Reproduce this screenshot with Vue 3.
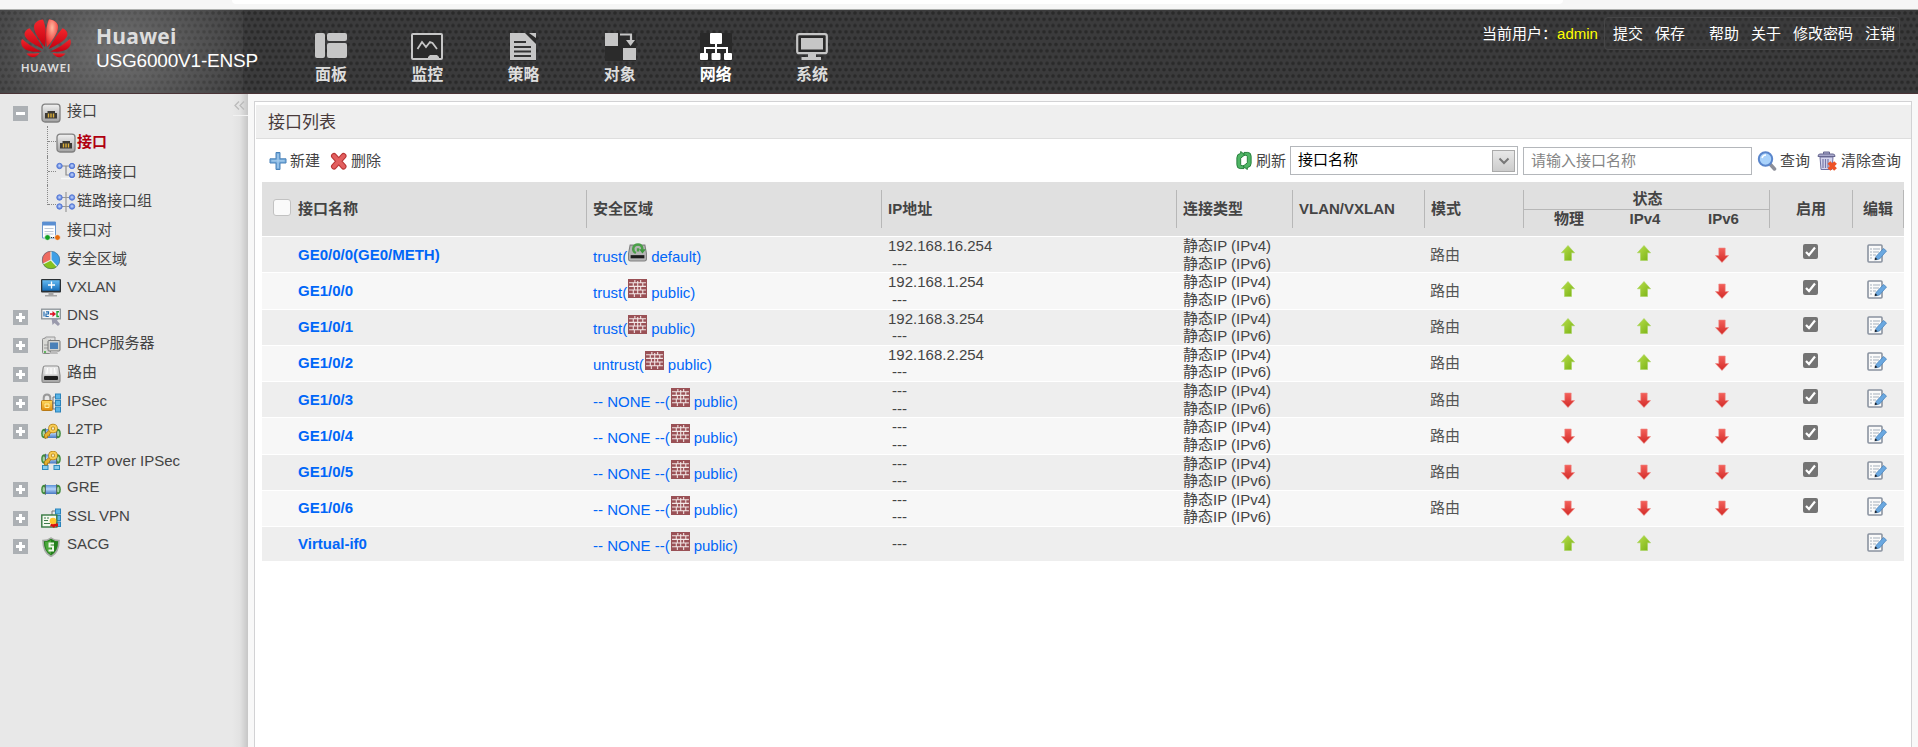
<script setup>
const nav = [
  { icon: 'dash', label: '面板' },
  { icon: 'monitor', label: '监控' },
  { icon: 'policy', label: '策略' },
  { icon: 'object', label: '对象' },
  { icon: 'network', label: '网络', active: true },
  { icon: 'system', label: '系统' },
]

const tree = [
  { icon: 'port', label: '接口', toggle: '-', cls: 'root' },
  { icon: 'port', label: '接口', cls: 'child current' },
  { icon: 'link', label: '链路接口', cls: 'child' },
  { icon: 'linkgroup', label: '链路接口组', cls: 'child last' },
  { icon: 'pair', label: '接口对' },
  { icon: 'zone', label: '安全区域' },
  { icon: 'vxlan', label: 'VXLAN' },
  { icon: 'dns', label: 'DNS', toggle: '+' },
  { icon: 'dhcp', label: 'DHCP服务器', toggle: '+' },
  { icon: 'route', label: '路由', toggle: '+' },
  { icon: 'ipsec', label: 'IPSec', toggle: '+' },
  { icon: 'l2tp', label: 'L2TP', toggle: '+' },
  { icon: 'l2tpip', label: 'L2TP over IPSec', cls: 'low' },
  { icon: 'gre', label: 'GRE', toggle: '+' },
  { icon: 'ssl', label: 'SSL VPN', toggle: '+' },
  { icon: 'sacg', label: 'SACG', toggle: '+' },
]

const row = (name, zone, vsys, ip, phy, v4) => ({
  name, zone, vsys, ips: [ip, '---'], types: ['静态IP (IPv4)', '静态IP (IPv6)'],
  mode: '路由', status: [phy, v4, 'down'], enable: true,
})
const rows = [
  row('GE0/0/0(GE0/METH)', 'trust(', 'default', '192.168.16.254', 'up', 'up'),
  row('GE1/0/0', 'trust(', 'public', '192.168.1.254', 'up', 'up'),
  row('GE1/0/1', 'trust(', 'public', '192.168.3.254', 'up', 'up'),
  row('GE1/0/2', 'untrust(', 'public', '192.168.2.254', 'up', 'up'),
  row('GE1/0/3', '-- NONE --(', 'public', '---', 'down', 'down'),
  row('GE1/0/4', '-- NONE --(', 'public', '---', 'down', 'down'),
  row('GE1/0/5', '-- NONE --(', 'public', '---', 'down', 'down'),
  row('GE1/0/6', '-- NONE --(', 'public', '---', 'down', 'down'),
  { name: 'Virtual-if0', zone: '-- NONE --(', vsys: 'public', ips: ['---'], types: [], mode: '', status: ['up', 'up', ''], enable: false },
]
</script>

<template>
  <div class="page">
    <svg class="defs" width="0" height="0" aria-hidden="true">
      <defs>
        <linearGradient id="gRed" x1="0" y1="0" x2="0" y2="1"><stop offset="0" stop-color="#f4262c" /><stop offset="1" stop-color="#c40010" /></linearGradient>
        <radialGradient id="gShine" cx=".5" cy=".3" r=".65"><stop offset="0" stop-color="#ffb9a0" /><stop offset="1" stop-color="#ec2a2c" /></radialGradient>
        <linearGradient id="gUp" x1="0" y1="0" x2="1" y2="1"><stop offset="0" stop-color="#b9e04c" /><stop offset="1" stop-color="#78b014" /></linearGradient>
        <linearGradient id="gDown" x1="0" y1="0" x2="0" y2="1"><stop offset="0" stop-color="#f4605a" /><stop offset="1" stop-color="#d22b28" /></linearGradient>
        <linearGradient id="gMetal" x1="0" y1="0" x2="0" y2="1"><stop offset="0" stop-color="#f2f2f2" /><stop offset="1" stop-color="#a2a2a2" /></linearGradient>
        <linearGradient id="gBlue" x1="0" y1="0" x2="0" y2="1"><stop offset="0" stop-color="#65baf2" /><stop offset="1" stop-color="#166fbb" /></linearGradient>
        <linearGradient id="gPipe" x1="0" y1="0" x2="0" y2="1"><stop offset="0" stop-color="#5b93d8" /><stop offset=".45" stop-color="#b4d3fa" /><stop offset="1" stop-color="#4477c2" /></linearGradient>
        <linearGradient id="gGold" x1="0" y1="0" x2="0" y2="1"><stop offset="0" stop-color="#ffd95c" /><stop offset="1" stop-color="#e08a0c" /></linearGradient>
        <radialGradient id="gNode" cx=".5" cy=".45" r=".55"><stop offset="0" stop-color="#c6d9ff" /><stop offset="1" stop-color="#4a6fd2" /></radialGradient>
      </defs>

      <symbol id="dash" viewBox="0 0 32 28"><rect x="0" y="0" width="10" height="25" rx="2" /><rect x="12" y="0" width="20" height="8" rx="2" /><rect x="12" y="10" width="20" height="15" rx="2" /></symbol>
      <symbol id="monitor" viewBox="0 0 32 28"><rect x="1" y="1" width="30" height="25" rx="1" fill="#2a2a2a" stroke="currentColor" stroke-width="2" /><path d="M6.500 16L11 9l4 5 4-5 2.500 1 4.500 6" fill="none" stroke="currentColor" stroke-width="1.800" /><path d="M17 26v-2l2-2h7l2 2v2z" /></symbol>
      <symbol id="policy" viewBox="0 0 32 28"><rect x="3" width="26" height="28" fill="#2c2c2c" /><path d="M3 0h15l11 11v16H3z" /><path d="M22 0h7v5z" /><path d="M7 9h12M7 14h17M7 18.500h17M7 23h17" stroke="#333" stroke-width="2" /></symbol>
      <symbol id="object" viewBox="0 0 32 28"><rect x="1" width="31" height="28" fill="#2b2b2b" /><rect x="1" y="0" width="13" height="13" /><rect x="19" y="15" width="13" height="12" /><path d="M16 1.500h11V8" fill="none" stroke="currentColor" stroke-width="2.200" /><path d="M22 7h9l-4.500 6z" /></symbol>
      <symbol id="network" viewBox="0 0 32 28"><rect width="32" height="28" fill="#292929" /><rect x="10" y="0" width="12" height="11" rx="1" /><path d="M16 10v12M5 21v-6h22v6" fill="none" stroke="currentColor" stroke-width="2" /><rect x="0" y="20" width="8" height="7" rx="1" /><rect x="11.500" y="20" width="9" height="7" rx="1" /><rect x="24" y="20" width="8" height="7" rx="1" /></symbol>
      <symbol id="system" viewBox="0 0 32 28"><rect x="1.200" y="1.200" width="29.600" height="19" rx="2" fill="#2a2a2a" stroke="currentColor" stroke-width="2.200" /><rect x="5" y="5" width="22" height="11.500" /><path d="M12 20h8v4h5v3H5.500v-3H12z" /></symbol>

      <symbol id="port" viewBox="0 0 20 20"><rect x="1" y="1.200" width="18" height="17.800" rx="3" fill="url(#gMetal)" stroke="#808080" stroke-width="1.300" /><path d="M4 15.500V10h2.500V8h7.500v2H16v5.500z" fill="#3c3a36" /><path d="M7.500 10.500v4M10 10.500v4M12.500 10.500v4" stroke="#dcae38" stroke-width="1.400" /></symbol>
      <symbol id="link" viewBox="0 0 20 20"><path d="M4 4h11M10 4v9h5" fill="none" stroke="#8b8b8b" stroke-width="1.200" /><path d="M5 16.500h13" stroke="#f7f7f7" stroke-width="1.500" /><g fill="url(#gNode)" stroke="#587bd7"><circle cx="3.500" cy="4" r="2.700" /><circle cx="16" cy="4" r="2.700" /><circle cx="16" cy="13" r="2.700" /></g></symbol>
      <symbol id="linkgroup" viewBox="0 0 20 20"><path d="M4 5.500h11M4 14.500h11M10 0v20" fill="none" stroke="#999" stroke-width="1.200" /><g fill="url(#gNode)" stroke="#587bd7"><circle cx="3.500" cy="5.500" r="2.700" /><circle cx="16" cy="5.500" r="2.700" /><circle cx="3.500" cy="14.500" r="2.700" /><circle cx="16" cy="14.500" r="2.700" /></g></symbol>
      <symbol id="pair" viewBox="0 0 20 20"><path d="M1.500 1h13v16h-13z" fill="#fff" stroke="#6d97cc" /><path d="M1.500 1h13v3.500h-13z" fill="#5a8fd2" /><path d="M3.500 7.500h9M3.500 10.500h9M3.500 13h9" stroke="#c1cad5" /><path d="M8 16.500h7" stroke="#333" stroke-dasharray="1 1" /><circle cx="6.500" cy="16.500" r="2.800" fill="#12a021" stroke="#f2f2f2" stroke-width=".6" /><circle cx="16.500" cy="16.500" r="2.800" fill="#e86c0a" stroke="#f2f2f2" stroke-width=".6" /></symbol>
      <symbol id="zone" viewBox="0 0 20 20"><circle cx="10" cy="10" r="9" fill="#3f9fe6" /><path d="M10 10V1a9 9 0 0 0-8 13z" fill="#ee6a60" /><path d="M10 10L2 14a9 9 0 0 0 14 2.700z" fill="#85c21f" /><path d="M10 1v9l-8 4M10 10l6 6.700" fill="none" stroke="#e9f2e5" stroke-width="1.200" /><circle cx="10" cy="10" r="8.700" fill="none" stroke="#47606b" stroke-opacity=".5" /></symbol>
      <symbol id="vxlan" viewBox="0 0 20 20"><rect x="0" y="1" width="20" height="13.500" rx="1" fill="#2a3034" /><rect x="1.300" y="2.200" width="17.400" height="10.500" fill="url(#gBlue)" /><path d="M10.500 3.500v7M7 7h7" stroke="#fff" stroke-width="1.300" /><path d="M7.500 14.500h5V17H16v1.500H4V17h3.500z" fill="#a5a5a5" /></symbol>
      <symbol id="dns" viewBox="0 0 20 20"><rect x=".7" y="2.200" width="18.600" height="9.600" fill="#f3f5f7" stroke="#8b9297" stroke-width="1.300" /><path d="M3 4.500v5M5 4.800h2.500v2.200H5v2.500h2.800" stroke="#236caf" stroke-width="1.200" fill="none" /><path d="M9 7h4" stroke="#d12" stroke-width="1.600" /><path d="M11.500 4l3.500 3-3.500 3z" fill="#d12" /><path d="M18 4.800h-2v4.700h2" stroke="#22a035" stroke-width="1.400" fill="none" /><path d="M10.500 11l7 1-1.500 1.500L19 17l-2 2-3.500-3-2 2z" fill="#9a9aac" /></symbol>
      <symbol id="dhcp" viewBox="0 0 20 20"><rect x="1.500" y="2.500" width="8" height="15" rx="1" fill="#d9d9d5" stroke="#888" /><path d="M3 2.500l2-1.500h9v3" fill="#ddd" stroke="#999" /><path d="M3 9h4M3 12h4" stroke="#999" /><rect x="7" y="4.500" width="12" height="10.500" rx="1" fill="#d2d3d0" stroke="#777" /><rect x="9" y="6.500" width="8" height="6.500" fill="#4a80b8" /><path d="M10 15h6l1 3H9z" fill="#bbb" /><circle cx="4" cy="16" r="1" fill="#38a838" /></symbol>
      <symbol id="route" viewBox="0 0 20 20"><path d="M4 2h12q1.500 0 1.800 1.500L19 11.500v5.500q0 1.500-1.500 1.500h-15Q1 18.500 1 17v-5.500l1.200-8Q2.500 2 4 2z" fill="url(#gMetal)" stroke="#8a8a8a" stroke-width="1.200" /><path d="M4.500 3.500h11l1 7h-13z" fill="#e9e9e9" /><rect x="3" y="12" width="14" height="4" rx="1" fill="#1c1c1c" /><path d="M6.500 4l-.7 6M10 4v6M13.500 4l.7 6" stroke="#fff" /></symbol>
      <symbol id="ipsec" viewBox="0 0 20 20"><path d="M2.700 9V5q0-3.500 3.300-3.500T9.300 5v4" fill="none" stroke="#999" stroke-width="2" /><rect x=".5" y="7.500" width="11" height="10" rx="1" fill="url(#gGold)" stroke="#b87a16" /><path d="M4 11h4v3.500H4z" fill="none" stroke="#fff0a0" /><path d="M14 4h-2v12h2M11 10h3" stroke="#777" fill="none" /><g fill="#5ab4e6" stroke="#2b83bb"><rect x="14.500" y="1" width="5" height="5" /><rect x="14.500" y="7.500" width="5" height="5" /><rect x="14.500" y="14" width="5" height="5" /></g></symbol>
      <symbol id="pipe" viewBox="0 0 20 20"><ellipse cx="3.500" cy="10.500" rx="3.300" ry="4.800" fill="#3f8a3c" /><ellipse cx="16.500" cy="10.500" rx="3.300" ry="4.800" fill="#3f8a3c" /><ellipse cx="2.800" cy="10.500" rx="1.200" ry="2.800" fill="#a9d2a2" /><ellipse cx="17.200" cy="10.500" rx="1.200" ry="2.800" fill="#a9d2a2" /><path d="M4.500 6h11v9h-11z" fill="url(#gPipe)" /><path d="M4.500 5.300v10.400M15.500 5.300v10.400" stroke="#566673" /></symbol>
      <symbol id="key" viewBox="0 0 20 20"><path d="M9 7.500l-5.500 5V16h3v-2h2v-2l3.500-2.500z" fill="#e5b030" stroke="#a97611" stroke-width=".8" /><circle cx="12" cy="6.500" r="3" fill="#f6edc8" stroke="#b07d12" stroke-width="3.600" /><circle cx="12" cy="6.500" r="3" fill="none" stroke="#f8cd55" stroke-width="2.200" /></symbol>
      <symbol id="l2tp" viewBox="0 0 20 20"><use href="#pipe" y="1" width="20" height="20" /><use href="#key" width="20" height="20" /></symbol>
      <symbol id="l2tpip" viewBox="0 0 20 20"><use href="#pipe" y="-2.500" width="20" height="20" /><g fill="#87ccef" stroke="#2b89bd"><rect x="1.500" y="14.500" width="5.500" height="4" /><rect x="13" y="14.500" width="5.500" height="4" /></g><use href="#key" y="-2" width="20" height="20" /></symbol>
      <symbol id="gre" viewBox="0 0 20 20"><use href="#pipe" width="20" height="20" /></symbol>
      <symbol id="ssl" viewBox="0 0 20 20"><g fill="#5ab4e6" stroke="#2b83bb"><rect x="14.500" y="1" width="5" height="5" /><rect x="14.500" y="7.500" width="5" height="5" /><rect x="14.500" y="14" width="5" height="4.500" /></g><path d="M14 3h-3v4" stroke="#777" fill="none" /><rect x=".8" y="7" width="15" height="12" fill="#f4f9f0" stroke="#367941" stroke-width="1.400" /><path d="M3 10h2M6 10h2M3 12.500h4M3 15.500h6" stroke="#3f7d4c" /><path d="M10 15.500h7v3h-3l-1 1.500-2-1.500H9z" fill="#d51313" /><circle cx="12" cy="13" r="3.300" fill="#ffc629" /></symbol>
      <symbol id="sacg" viewBox="0 0 20 20"><path d="M2 3.500q5 0 8-2.500 3 2.500 8 2.500 0 12-8 16-8-4-8-16z" fill="#24811c" stroke="#a6aaa6" stroke-width="1.600" /><path d="M4 5q4 0 6-2v14.500Q4 14 4 5z" fill="#4ca93b" /><path d="M13 6.500H8.500v3H12v4H7.500" fill="none" stroke="#eef8e8" stroke-width="2" /></symbol>

      <symbol id="add" viewBox="0 0 20 20"><path d="M8 1.500h4v6.300h6V12h-6v6.500H8V12H2V7.800h6z" fill="#75abdb" stroke="#4a82ba" stroke-linejoin="round" /><path d="M10 3v14M3.500 9.800h13" stroke="#a8ceee" stroke-width="1.200" /></symbol>
      <symbol id="del" viewBox="0 0 18 20"><path d="M4 5l9.500 10.500M13.500 5L4 15.500" stroke="#b93535" stroke-width="6" stroke-linecap="round" /><path d="M4 5l9.500 10.500M13.500 5L4 15.500" stroke="#e25f5f" stroke-width="4" stroke-linecap="round" /></symbol>
      <symbol id="refresh" viewBox="0 0 18 20"><g fill="#4fb565" stroke="#237c38" stroke-width="1"><path d="M9 18.500H5q-3.500 0-3.500-4V7q0-4 4-4.500V.5L10 4 5.500 7.500V14q0 1.500 1.500 1.500h2z" /><path d="M9 1.500h4q3.500 0 3.500 4V13q0 4-4 4.500v2L8 16l4.500-3.500V6q0-1.500-1.500-1.500H9z" /></g></symbol>
      <symbol id="search" viewBox="0 0 20 20"><path d="M13 13l4.500 5" stroke="#8d8f99" stroke-width="3.500" stroke-linecap="round" /><circle cx="8.500" cy="8" r="6.700" fill="#a9d2fb" stroke="#5a86cc" stroke-width="2" /><path d="M5 7q1-3 4-3" fill="none" stroke="#fff" stroke-width="1.500" /></symbol>
      <symbol id="trash" viewBox="0 0 20 20"><path d="M3 6h13l-1 12.500H4z" fill="#d6d6ee" stroke="#7070a0" /><path d="M6 8v9M8.500 8v9M11 8v9" stroke="#7676a8" stroke-width="1.200" /><path d="M1 5.500q0-2.500 2-2.500h13q2 0 2 2.500zM6.500 3V1h6v2" fill="#a9a9cc" stroke="#66668f" /><path d="M12 11.500l6.500 7M18.500 11.500l-6.500 7" stroke="#ee5226" stroke-width="3.800" /></symbol>
      <symbol id="up" viewBox="0 0 14 16"><path d="M7 .5l6.600 7.300h-3.100v7.700h-7V7.800H.4z" fill="url(#gUp)" stroke="#a8d35e" stroke-width=".6" /></symbol>
      <symbol id="down" viewBox="0 0 14 16"><path d="M7 15.500L.4 8.500h3.400V1h6.400v7.500h3.400z" fill="url(#gDown)" stroke="#ef8b86" stroke-width=".6" /></symbol>
      <symbol id="edit" viewBox="0 0 20 19"><rect x="1" y="1" width="14" height="17" rx="1" fill="#fafafa" stroke="#8a93a0" stroke-width="1.600" /><path d="M3 5h2M6 5h7M3 8h2M6 8h6M3 11h2M6 11h3M3 14h2" stroke="#a5b0bc" /><path d="M16.500 4.500l3 2.500-7 8-4 .8.800-3.600z" fill="#6aa8e0" stroke="#4a84bc" stroke-width=".8" /><path d="M8 13.200l-.4 3 3-.9z" fill="#1b2530" /></symbol>
      <symbol id="brick" viewBox="0 0 18 18"><rect width="18" height="18" fill="#9a5156" /><path d="M1 3.500h16M1 7h16M1 10.500h16M1 14h16M6.500 1v2.500M12 1v2.500M5 3.500V7M14 3.500V7M6 7v3.500M12 7v3.500M5 10.500V14M14 10.500V14M6 14v3M12 14v3M9.200 2v12" stroke="#f3e8e7" stroke-width="1" /></symbol>
      <symbol id="vsys" viewBox="0 0 18 18"><path d="M2 2h14l1.500 8v5q0 2-2 2h-13q-2 0-2-2v-5z" fill="#b5b5b5" stroke="#828282" /><rect x="2.500" y="11.500" width="13" height="3" fill="#1d1d1d" /><path d="M7.500 9.500Q4.500 8 5 5q.8-3.500 4.500-3.500Q13 1.500 13.500 5v1.500M9.500 5v3" fill="none" stroke="#4aa048" stroke-width="2.300" /><path d="M10.500 6h6.500l-3.300 4z" fill="#3d983c" /></symbol>
    </svg>

    <div class="browser-edge"><div class="tab-edge"></div></div>

    <header class="header">
      <div class="brand">
        <div class="logo">
          <svg width="50" height="40" viewBox="0 0 50 40">
            <g id="petals" fill="url(#gRed)">
              <path d="M24 28C19.500 22.500 13 14 13 8c0-4 3.500-7 9-7.500C25.500 8 25.200 19 24 28z" />
              <path d="M22.300 30C14 26 3.500 21 3.500 15c0-2.500 2-4.500 5-5.800C12 13 18.500 22 22.300 30z" />
              <path d="M20.500 32.500C12 33.500 3 32 .8 26.500 0 24 0 22 1 20c5 4.500 12 9 19.500 12.500z" />
              <path d="M18.500 34c-3 5-9 6-13 .5 4 .3 9 0 13-.5z" />
            </g>
            <use href="#petals" transform="matrix(-1 0 0 1 50 0)" />
            <path d="M26 28C30.500 22.500 37 14 37 8c0-4-3.500-7-9-7.500C24.500 8 24.800 19 26 28z" fill="url(#gShine)" />
          </svg>
          <span class="logo-text">HUAWEI</span>
        </div>
        <div class="product"><b>Huawei</b><span>USG6000V1-ENSP</span></div>
      </div>
      <nav class="nav">
        <a v-for="n in nav" :key="n.icon" :class="{ active: n.active }">
          <svg width="32" height="28"><use :href="'#' + n.icon" /></svg>
          <span>{{ n.label }}</span>
        </a>
      </nav>
      <div class="user">
        <span class="who">当前用户：<em>admin</em></span>
        <div class="links">
          <a>提交</a><a>保存</a><a class="gap">帮助</a><a>关于</a><a>修改密码</a><a>注销</a>
        </div>
      </div>
    </header>

    <div class="body">
      <aside class="side">
        <div v-for="(t, i) in tree" :key="i" class="item" :class="[t.cls, { toggled: t.toggle }]">
          <span class="slot"><i v-if="t.toggle" class="toggle" :class="{ plus: t.toggle === '+' }"></i></span>
          <svg width="20" height="20"><use :href="'#' + t.icon" /></svg>
          <span class="label">{{ t.label }}</span>
        </div>
        <div class="collapse"><svg width="11" height="9" viewBox="0 0 11 9"><path d="M5 .5L1 4.500l4 4M10 .5L6 4.500l4 4" fill="none" stroke="#bbb" stroke-width="1.300" /></svg></div>
      </aside>

      <main class="panel">
        <h1>接口列表</h1>
        <div class="tools">
          <svg width="20" height="20"><use href="#add" /></svg><span class="t-add">新建</span>
          <svg width="18" height="20"><use href="#del" /></svg><span class="t-del">删除</span>
          <svg class="i-refresh" width="18" height="19"><use href="#refresh" /></svg><span class="t-refresh">刷新</span>
          <div class="select"><span>接口名称</span><i><svg width="12" height="8" viewBox="0 0 12 8"><path d="M1.500 1.500L6 6l4.500-4.500" fill="none" stroke="#777" stroke-width="2" /></svg></i></div>
          <input class="query" placeholder="请输入接口名称" />
          <svg class="i-search" width="20" height="20"><use href="#search" /></svg><span class="t-search">查询</span>
          <svg class="i-trash" width="20" height="20"><use href="#trash" /></svg><span class="t-trash">清除查询</span>
        </div>

        <div class="grid">
          <div class="row head">
            <div class="cell first"><i class="box"></i>接口名称</div>
            <div class="cell">安全区域</div>
            <div class="cell">IP地址</div>
            <div class="cell">连接类型</div>
            <div class="cell">VLAN/VXLAN</div>
            <div class="cell">模式</div>
            <div class="cell status">
              <div class="top">状态</div>
              <div class="subs"><span>物理</span><span>IPv4</span><span>IPv6</span></div>
            </div>
            <div class="cell mid">启用</div>
            <div class="cell mid">编辑</div>
          </div>
          <div v-for="r in rows" :key="r.name" class="row data">
            <div class="cell name">{{ r.name }}</div>
            <div class="cell zone">{{ r.zone }}<svg width="19" height="19"><use :href="r.vsys === 'default' ? '#vsys' : '#brick'" /></svg><span>{{ r.vsys }})</span></div>
            <div class="cell lines ip"><span v-for="(x, i) in r.ips" :key="i" :class="{ none: x === '---' }">{{ x }}</span></div>
            <div class="cell lines"><span v-for="x in r.types" :key="x">{{ x }}</span></div>
            <div class="cell"></div>
            <div class="cell mode">{{ r.mode }}</div>
            <div class="cell subs">
              <span v-for="(s, i) in r.status" :key="i"><svg v-if="s" :class="s" width="14" height="16"><use :href="'#' + s" /></svg></span>
            </div>
            <div class="cell mid">
              <svg v-if="r.enable" class="check" width="15" height="15" viewBox="0 0 15 15"><rect width="15" height="15" rx="2" fill="#747474" /><path d="M3 8l3 3 6-7.500" fill="none" stroke="#fff" stroke-width="2.200" /></svg>
            </div>
            <div class="cell mid"><svg class="edit" width="20" height="19"><use href="#edit" /></svg></div>
          </div>
        </div>
      </main>
    </div>
  </div>
</template>

<style>
body { margin: 0; overflow: hidden; }
</style>

<style scoped>
.page { height: 747px; display: flex; flex-direction: column; overflow: hidden; background: #f8f8f8; color: #444; font: 15px/18px "Liberation Sans", "Noto Sans CJK SC", sans-serif; }
.page * { box-sizing: border-box; }
svg { display: block; flex: none; }
.defs { position: absolute; }
.browser-edge { height: 10px; flex: none; background: #f6f6f6; border-bottom: 1px solid #aeb0ae; }
.tab-edge { height: 4px; margin: 0 355px 0 232px; background: #fff; border-radius: 0 0 5px 5px; }

.header { position: relative; height: 84px; flex: none; display: flex; border-bottom: 1px solid #4a3437;
  background: radial-gradient(circle at 3px 3px, #2a2a2a 1.300px, transparent 2.200px) 0 0 / 6px 12.600px, radial-gradient(circle at 0 9.300px, #2a2a2a 1.300px, transparent 2.200px) 0 0 / 6px 12.600px, radial-gradient(circle at 6px 9.300px, #2a2a2a 1.300px, transparent 2.200px) 0 0 / 6px 12.600px, #3b3b3c; }
.brand { width: 243px; display: flex; background: radial-gradient(ellipse 150px 110px at 112px 40px, rgba(160, 160, 160, .52), rgba(150, 150, 150, .32) 50%, rgba(150, 150, 150, .04)); }
.logo { width: 50px; margin: 9px 0 0 21px; display: flex; flex-direction: column; align-items: center; }
.logo-text { margin-top: 2px; font: 700 11px/14px Lato, sans-serif; letter-spacing: .9px; color: #ddd; }
.product { margin: 12px 0 0 25px; display: flex; flex-direction: column; white-space: nowrap; }
.product b { font: 700 21px/28px "Open Sans", sans-serif; color: #ddd; letter-spacing: .2px; }
.product span { font-size: 19px; line-height: 22px; color: #fff; letter-spacing: -.2px; }
.nav { display: flex; margin-left: 40px; }
.nav a { width: 96.200px; padding-top: 23px; display: flex; flex-direction: column; align-items: center; color: #c6c6c6; fill: currentColor; }
.nav span { margin-top: 3px; font-size: 16px; line-height: 22px; font-weight: 700; color: #ddd; }
.nav .active, .nav .active span { color: #fff; }
.user { display: flex; margin: 7px 18px 0 auto; color: #fff; }
.who { line-height: 33px; margin-right: 6px; }
.who em { font-style: normal; color: #ff0; }
.links { height: 33px; display: flex; align-items: center; gap: 12px; padding: 0 4px 0 8px; border: 1px solid #464647; border-radius: 4px; background: rgba(60, 60, 60, .25); }
.links .gap { margin-left: 12px; }

.body { flex: 1; display: flex; min-height: 0; }
.side { position: relative; width: 248px; flex: none; padding-top: 4px; background: linear-gradient(90deg, #e8e8e8 232px, #e2e2e2 240px, #c6c6c6 248px); }
.item { position: relative; height: 28.730px; display: flex; align-items: center; }
.item.root { height: 30px; }
.item.child { height: 29.500px; }
.slot { width: 41px; padding-left: 13px; flex: none; }
.child .slot { width: 56px; }
.label { margin: 0 0 2px 6px; white-space: nowrap; }
.child .label { margin: 0 0 1px 1px; }
.toggled .label { margin-bottom: 5px; }
.low .label { margin-bottom: 0; }
.current .label { color: #b00010; font-weight: 700; }
.toggle { display: block; width: 15px; height: 15px; background: linear-gradient(#fff, #fff) center / 9px 3px no-repeat, #acb0b4; }
.toggle.plus { background: linear-gradient(#fff, #fff) center / 9px 3px no-repeat, linear-gradient(#fff, #fff) center / 3px 9px no-repeat, #acb0b4; }
.child::before { content: ""; position: absolute; left: 47px; top: -2px; bottom: 0; border-left: 1px dotted #888; }
.child::after { content: ""; position: absolute; left: 48px; top: 13px; width: 8px; border-top: 1px dotted #888; }
.child.last::before { bottom: 12px; }
.child.last::after { top: 17px; }
.collapse { position: absolute; right: 0; top: 0; width: 15px; height: 22px; padding: 7px 0 0 1px; border-bottom: 1px solid #f2f2f2; }

.panel { width: 1658px; margin: 7px 0 0 6px; border: 1px solid #d2d2d4; border-bottom: 0; background: #fff; }
h1 { margin: 3px 0 0 1px; height: 34px; padding-left: 12px; background: #efefef; border-bottom: 1px solid #dedede; font-size: 17px; line-height: 35px; font-weight: 400; color: #493b3b; }
.tools { height: 43px; padding: 0 0 0 13px; display: flex; align-items: center; white-space: nowrap; }
.t-add { margin: 0 10px 0 2px; }
.t-del { margin-left: 3px; }
.i-refresh { margin-left: 854px; }
.t-refresh { margin: 0 4px 0 3px; }
.select { width: 228px; height: 29px; display: flex; align-items: center; border: 1px solid #b4b7bb; padding: 0 2px 0 7px; color: #000; }
.select span { margin-bottom: 2px; }
.select i { width: 23px; height: 22px; margin-left: auto; display: flex; align-items: center; justify-content: center; border: 1px solid #aaa; background: linear-gradient(#e8e8e8, #ccc); }
.query { width: 229px; height: 28px; margin: 0 5px; padding: 0 7px; border: 1px solid #b4b7bb; font: inherit; }
.query::placeholder { color: #858585; }
.t-search { margin: 0 7px 0 3px; }
.t-trash { margin-left: 4px; }

.grid { margin-left: 7px; width: 1642px; }
.row { display: grid; grid-template-columns: 325px 295px 295px 116px 132px 99px 246px 83px 51px; height: 36.250px; border-bottom: 1px solid #fff; background: #f7f7f7; }
.data:nth-child(even) { background: #eee; }
.data:last-child { height: 35px; }
.cell { display: flex; align-items: center; padding-left: 6px; white-space: nowrap; min-width: 0; }
.head { height: 55px; padding: 8px 0; background: #e0e0e0; font-weight: 700; }
.head .cell { border-right: 1px solid #b7b7b7; }
.head .first { padding-left: 11px; }
.box { width: 18px; height: 17px; margin: -3px 7px 0 0; border: 1px solid #c2c2c2; border-radius: 3px; background: #fafafa; }
.head .status { flex-direction: column; align-items: stretch; padding: 0; }
.top { height: 20px; line-height: 18px; padding-left: 2px; text-align: center; border-bottom: 1px solid #b7b7b7; }
.subs { display: grid; grid-template-columns: 89px 63px 94px; padding: 0; }
.subs span { display: flex; justify-content: center; }
.head .subs span { padding-left: 1px; line-height: 18px; }
.data .subs span { padding-right: 2px; }
.mid { justify-content: center; padding: 0; }
.data .mid { padding-right: 3px; }
.name { padding-left: 36px; font-weight: 700; color: #0066f8; }
.zone { padding-top: 4px; color: #0066f8; }
.zone svg { margin: -9px 0 0 1px; }
.zone span { margin-left: 4px; }
.lines { flex-direction: column; align-items: flex-start; justify-content: center; line-height: 17.600px; }
.ip .none { padding-left: 4px; }
.mode { color: #555; padding-left: 5px; }
.up { margin-top: -3px; }
.check { margin-top: -6px; }
.edit { margin-top: -3px; }
</style>
